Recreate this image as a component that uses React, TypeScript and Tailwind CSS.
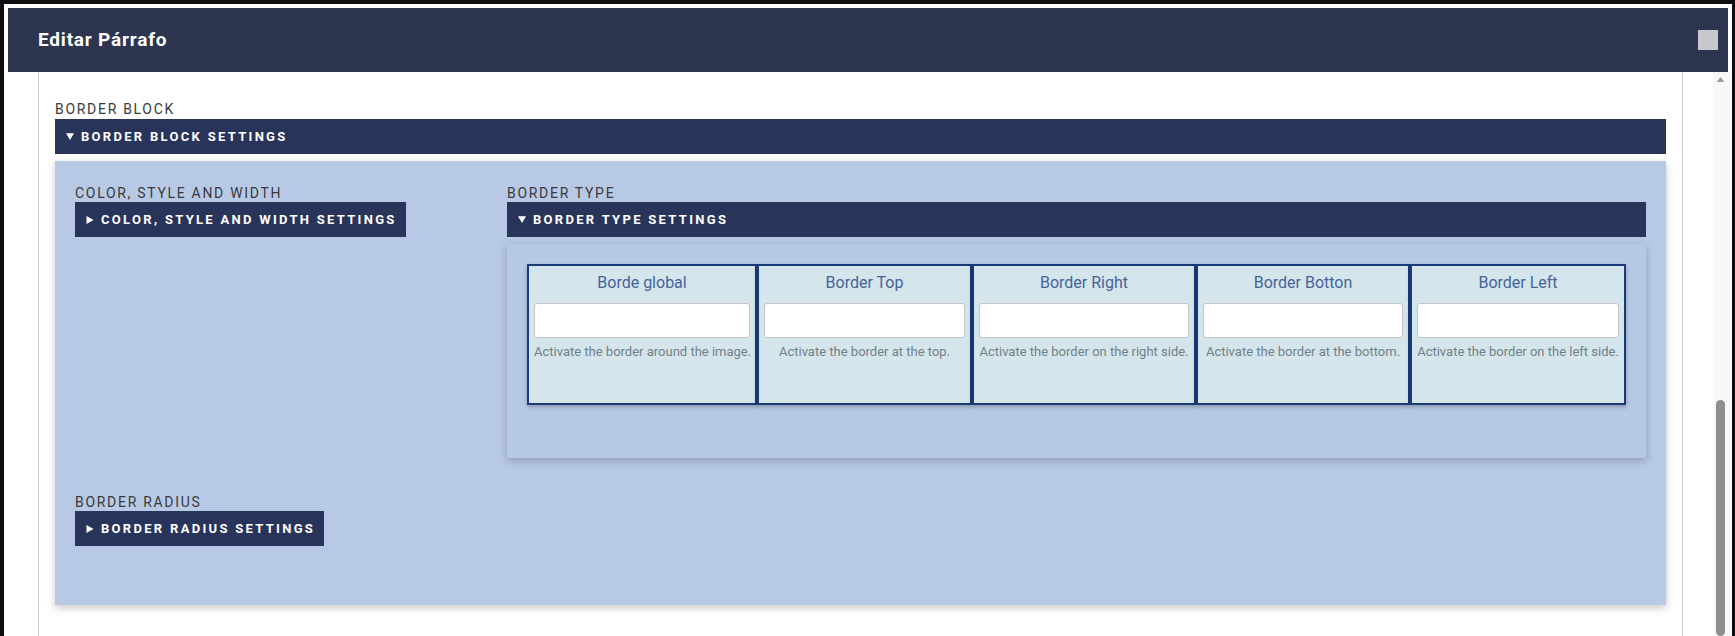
const cards = [
  { title: 'Borde global', help: 'Activate the border around the image.', w: 'w-[230px]' },
  { title: 'Border Top', help: 'Activate the border at the top.', w: 'w-[215px]' },
  { title: 'Border Right', help: 'Activate the border on the right side.', w: 'w-[224px]' },
  { title: 'Border Botton', help: 'Activate the border at the bottom.', w: 'w-[214px]' },
  { title: 'Border Left', help: 'Activate the border on the left side.', w: 'w-[216px]' },
];

function Down() {
  return (
    <svg width="8" height="7" viewBox="0 0 8 7" className="shrink-0">
      <path d="M0 0.3h8L4 7z" fill="white" />
    </svg>
  );
}

function Right() {
  return (
    <svg width="8" height="8" viewBox="0 0 8 8" className="shrink-0">
      <path d="M0.5 0v8L7.5 4z" fill="white" />
    </svg>
  );
}

function Label({ children }: { children: React.ReactNode }) {
  return (
    <div className="text-[14px] leading-4 tracking-[1.7px] text-[#3a3a3a] uppercase">{children}</div>
  );
}

export default function App() {
  return (
    <div
      className="w-[1735px] h-[636px] bg-[#0c0e12] pl-[4px] pt-[4px] pr-[3px] overflow-hidden"
      style={{ fontFamily: 'Roboto, "Liberation Sans", sans-serif' }}
    >
      <div className="bg-white h-full flex flex-col">
        {/* Window header */}
        <div className="px-[4px] pt-[4px]">
          <div className="h-[64px] bg-[#2d3550] flex items-center justify-between pl-[30px] pr-[10px]">
            <h1 className="text-[19px] font-bold tracking-[0.8px] text-white">Editar Párrafo</h1>
            <div className="w-5 h-5 bg-[#c8c8cc]"></div>
          </div>
        </div>

        {/* Body */}
        <div className="flex flex-1 min-h-0">
          <div className="flex-1 pl-[34px] pr-[30px] overflow-hidden">
            <div className="h-full border-l border-r border-[#cfcfcf] px-4 pt-[29px]">
              <Label>Border block</Label>
              <div className="mt-[2px] h-[35px] bg-[#29345a] text-white font-bold text-[13px] tracking-[2.3px] flex items-center gap-[7px] pl-[11px]">
                <Down />
                <span>BORDER BLOCK SETTINGS</span>
              </div>

              <div className="mt-[7px] bg-[#b8c9e6] px-5 pt-[24px] pb-[59px] shadow-[0_3px_8px_rgba(0,0,0,0.22)]">
                <div className="grid grid-cols-[412px_1fr] gap-x-5 gap-y-[36px]">
                  {/* Color, style and width */}
                  <div>
                    <Label>Color, style and width</Label>
                    <div className="mt-px inline-flex h-[35px] bg-[#29345a] text-white font-bold text-[13px] tracking-[2.3px] items-center gap-[7px] pl-[11px] pr-[9px]">
                      <Right />
                      <span>COLOR, STYLE AND WIDTH SETTINGS</span>
                    </div>
                  </div>

                  {/* Border type */}
                  <div>
                    <Label>Border type</Label>
                    <div className="mt-px h-[35px] bg-[#29345a] text-white font-bold text-[13px] tracking-[2.3px] flex items-center gap-[7px] pl-[11px]">
                      <Down />
                      <span>BORDER TYPE SETTINGS</span>
                    </div>
                    <div className="mt-[7px] bg-[#b7c8e5] p-5 pb-[53px] shadow-[0_3px_8px_rgba(0,0,0,0.22)]">
                      <div className="flex">
                        {cards.map((card) => (
                          <div
                            key={card.title}
                            className={`${card.w} h-[141px] border-2 border-[#1b3a7a] bg-[#d4e6eb] px-[5px] shadow-[0_2px_4px_rgba(0,0,0,0.25)]`}
                          >
                            <div className="pt-[7px] text-[16px] leading-5 text-center text-[#45639b]">{card.title}</div>
                            <input className="mt-[10px] block w-full h-[35px] bg-white border border-[#c4c4c4] rounded-[3px]" />
                            <div className="mt-[6px] text-[13px] leading-4 text-center text-[#727f8a] whitespace-nowrap">
                              {card.help}
                            </div>
                          </div>
                        ))}
                      </div>
                    </div>
                  </div>

                  {/* Border radius */}
                  <div>
                    <Label>Border radius</Label>
                    <div className="mt-px inline-flex h-[35px] bg-[#29345a] text-white font-bold text-[13px] tracking-[2.3px] items-center gap-[7px] pl-[11px] pr-[9px]">
                      <Right />
                      <span>BORDER RADIUS SETTINGS</span>
                    </div>
                  </div>
                </div>
              </div>
            </div>
          </div>

          {/* Scrollbar */}
          <div className="w-[19px] bg-[#f8f8f8] flex flex-col">
            <svg width="9" height="6" viewBox="0 0 9 6" className="ml-[3px] mt-[5px]">
              <path d="M4.5 0L9 6H0z" fill="#9a9a9a" />
            </svg>
            <div className="ml-[3px] mt-[318px] w-[9px] h-[260px] rounded-full bg-[#8e8e8e]"></div>
          </div>
        </div>
      </div>
    </div>
  );
}
